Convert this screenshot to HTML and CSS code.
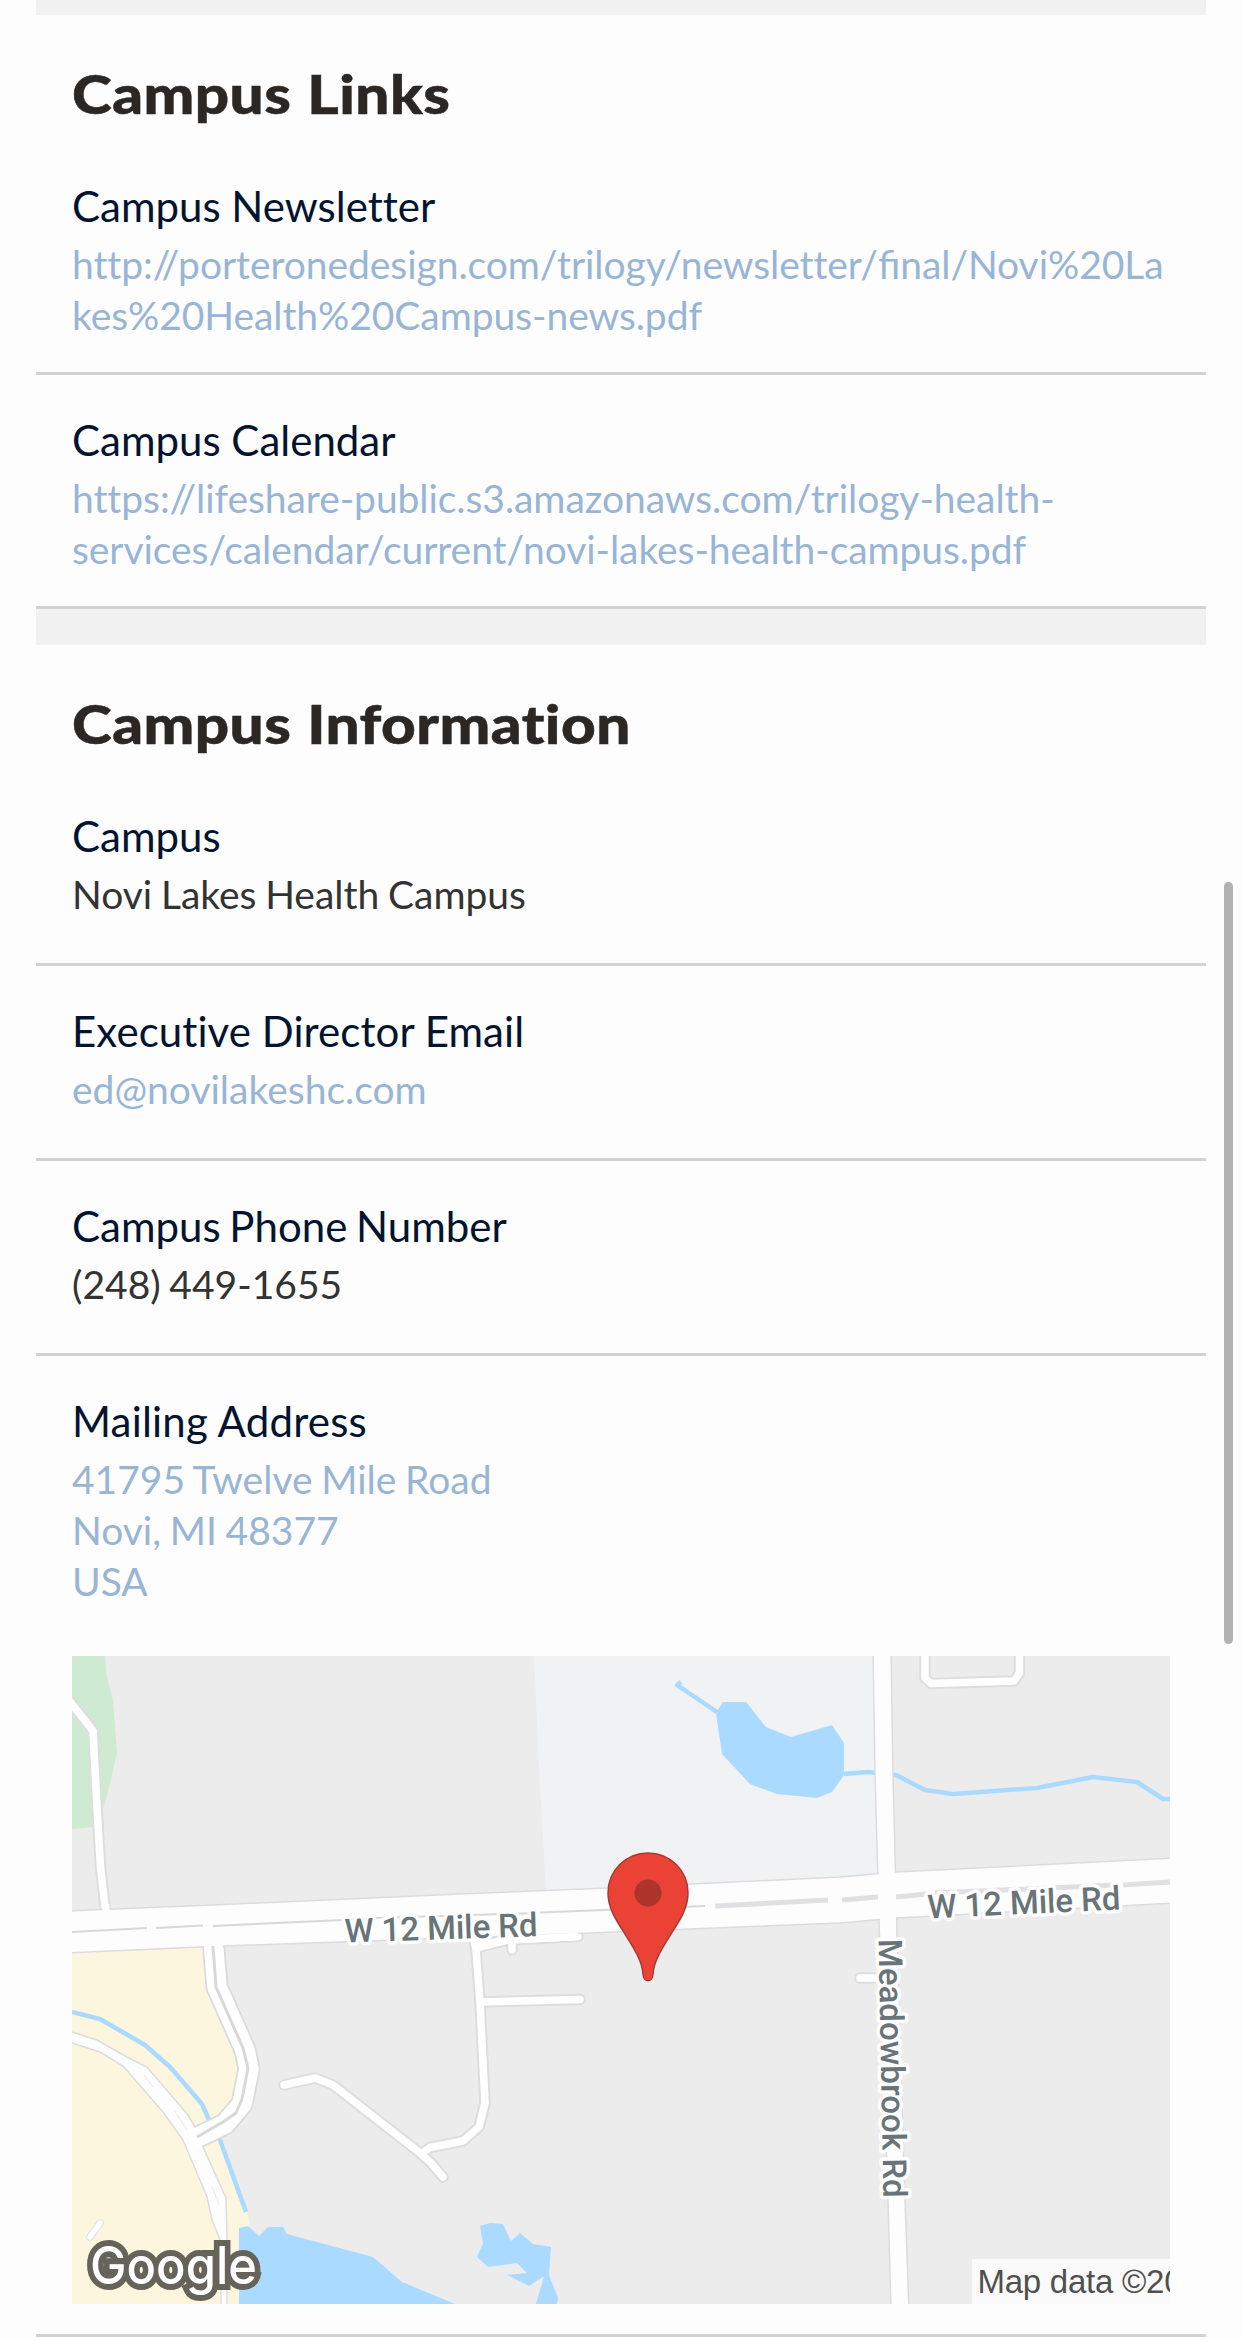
FILE: index.html
```html
<!DOCTYPE html>
<html lang="en">
<head>
<meta charset="utf-8">
<title>Campus</title>
<link rel="stylesheet" href="styles.css">
</head>
<body>
<main class="page">
  <div class="band band-top"></div>
  <section class="links">
    <h2 class="heading">Campus Links</h2>
    <div class="item">
      <h3 class="label">Campus Newsletter</h3>
      <a class="value link">http://porteronedesign.com/trilogy/newsletter/<span class="ligated">fi</span>nal/Novi%20La<br>kes%20Health%20Campus-news.pdf</a>
    </div>
    <div class="item">
      <h3 class="label">Campus Calendar</h3>
      <a class="value link">https://lifeshare-public.s3.amazonaws.com/trilogy-health-<br>services/calendar/current/novi-lakes-health-campus.pdf</a>
    </div>
  </section>
  <div class="band"></div>
  <section class="info">
    <h2 class="heading">Campus Information</h2>
    <div class="item">
      <h3 class="label">Campus</h3>
      <p class="value">Novi Lakes Health Campus</p>
    </div>
    <div class="item">
      <h3 class="label label-email">Executive Director Email</h3>
      <a class="value link">ed@novilakeshc.com</a>
    </div>
    <div class="item">
      <h3 class="label label-phone">Campus Phone Number</h3>
      <p class="value">(248) 449-1655</p>
    </div>
    <div class="item item-map">
      <h3 class="label label-address">Mailing Address</h3>
      <a class="value link">41795 Twelve Mile Road<br>Novi, MI 48377<br>USA</a>
      <svg class="map" viewBox="72 1656 1098 648" role="img" aria-label="Map">
        <rect class="land" x="72" y="1656" width="1098" height="648"/>
        <path class="block" d="M534 1656L540 1787L546 1890H880L873 1656Z"/>
        <path class="park" d="M72 1656H105L106 1673L113 1700L117 1752L111 1780L104 1806L93 1827L72 1829Z"/>
        <path class="sand" d="M72 1950L205 1944L209 1990L236 2050L242 2073L234 2103L218 2135L248 2213L250 2230L239 2228V2304H72Z"/>
        <!-- water -->
        <path class="water" d="M723 1702H746L766 1727L791 1737L832 1725L844 1743V1775L832 1792L817 1798L777 1794L750 1784L722 1754L716 1713Z"/>
        <path class="water" d="M239 2228L248 2226L259 2236L268 2227H283L287 2234L373 2257L402 2282L455 2304H239Z"/>
        <path class="water" d="M480 2226L490 2223L503 2224L511 2241L520 2233L533 2244L551 2247L549 2275L558 2298L557 2304H536L544 2276L529 2286L507 2275L527 2273L517 2263L488 2267L477 2257L483 2243Z"/>
        <path class="stream" d="M681 1682L677 1685L717 1712"/>
        <path class="stream" d="M844 1774L868 1772L896 1775L925 1790L953 1794L1037 1788L1093 1777L1137 1782L1163 1799H1170"/>
        <path class="stream" d="M72 2012L100 2019L145 2045L170 2067L202 2104L209 2120L220 2140L246 2212"/>
        <!-- local streets: casing, then fill -->
        <g class="casing">
          <path d="M68 1699L93 1731L97 1807L100.500 1867L106 1915"/>
          <path d="M925 1650V1678L931 1683.500L1014 1681L1019.500 1673V1650"/>
          <path d="M474 1940L476 1950L480 2002L485 2103L479 2127L463 2141L430 2147.500L421 2154"/>
          <path d="M476 1948L507 1940L578 1936.500M512 1940V1950M481 2002L580 1999.500"/>
          <path d="M284 2085L315 2078L333 2085L420 2153L431 2163L443 2177"/>
          <path d="M860 1978H885"/>
        </g>
        <g class="street">
          <path d="M68 1699L93 1731L97 1807L100.500 1867L106 1915"/>
          <path d="M925 1650V1678L931 1683.500L1014 1681L1019.500 1673V1650"/>
          <path d="M474 1940L476 1950L480 2002L485 2103L479 2127L463 2141L430 2147.500L421 2154"/>
          <path d="M476 1948L507 1940L578 1936.500M512 1940V1950M481 2002L580 1999.500"/>
          <path d="M284 2085L315 2078L333 2085L420 2153L431 2163L443 2177"/>
          <path d="M860 1978H885"/>
        </g>
        <path class="stub-casing" d="M100 2223L90 2237"/>
        <path class="stub" d="M100 2223L90 2237"/>
        <!-- curved road and divided lane -->
        <path class="wide-casing" d="M213 1940L217 1987L245 2050L249 2069L242 2104L225 2124L192 2140"/>
        <path class="road" d="M66 2030L97 2040L127 2057L147 2067L188 2115L195 2127L203 2147L226 2198L227 2240V2310H221V2242L212 2220L207 2197L183 2140L163 2112L123 2066L100 2052L66 2041Z"/>
        <path class="wide" d="M213 1940L217 1987L245 2050L249 2069L242 2104L225 2124L192 2140"/>
        <path class="divider" d="M213 1946L216 1987L243 2048L248 2068L242 2099L236 2113L223 2122L197 2137"/>
        <path class="faint" d="M144 2075L153 2087M174 2110L187 2130M212 2186L219 2205"/>
        <!-- main roads -->
        <path class="road" d="M873 1650L875 1773L879 1920L888 2200L891 2310H909L905 2200L897 1937L893 1773L891 1650Z"/>
        <path class="road" d="M66 1911L213 1905L460 1894L608 1888L840 1877L896 1872L1176 1858V1903L897 1918L840 1923L540 1935L223 1946L200 1947L66 1953Z"/>
        <path class="cover" d="M102.500 1904H109.500V1914H102.500ZM204 1942H223V1951H204ZM879 1868H894.500V1880H879ZM880 1914H896V1926H880Z"/>
        <path class="street" d="M476 1946L507 1940L576 1936.500"/>
        <path class="divider" d="M213 1946V1951"/>
        <path class="thin" d="M72 1932L147 1928M156 1928L203 1925.500M213 1926L343 1920M345 1919L536 1913M540 1912.500L705 1906"/>
        <path class="thick" d="M715 1906L828 1900M842 1900L878 1897M896 1897L927 1894M935 1893L1115 1885M1123 1885L1170 1882"/>
        <!-- marker -->
        <path class="pin" d="M648 1853C626 1853 608 1870.500 608 1893C608 1908 616 1920 625 1934C635 1950 642 1961 643 1974C643.200 1983 652.800 1983 653 1974C654 1961 661 1950 671 1934C680 1920 688 1908 688 1893C688 1870.500 670 1853 648 1853Z"/>
        <circle class="pin-dot" cx="648" cy="1893" r="13.500"/>
        <text class="road-name" transform="translate(345 1942.500) rotate(-1.900)" textLength="193">W 12 Mile Rd</text>
        <text class="road-name" transform="translate(928 1918.500) rotate(-2.700)" textLength="193">W 12 Mile Rd</text>
        <text class="road-name" transform="translate(878.500 1939) rotate(88.900)" textLength="259" lengthAdjust="spacingAndGlyphs">Meadowbrook Rd</text>
        <text class="brand" x="90" y="2284" textLength="167" lengthAdjust="spacingAndGlyphs">Google</text>
        <rect class="credit-box" x="972" y="2259" width="198" height="45"/>
        <text class="credit" x="977.500" y="2293">Map data ©20</text>
      </svg>
    </div>
  </section>
  <div class="scrollbar"></div>
</main>
</body>
</html>
```
FILE: styles.css
```css
* { box-sizing: border-box; }
html { background: #fdfdfd; }
body {
  margin: 0;
  height: 2340px;
  overflow: hidden;
  font-family: Lato, "Open Sans", sans-serif;
}
h2, h3, p { margin: 0; }
.page {
  position: relative;
  height: 2340px;
  padding: 0 36px;
}
.band { height: 36px; background: #f1f1f1; }
.band-top { height: 15px; }
.heading {
  width: fit-content;
  height: 126px;
  margin-left: 36px;
  padding-top: 49px;
  font-size: 53px;
  line-height: 60px;
  font-weight: 900;
  letter-spacing: 0.4px;
  word-spacing: 1px;
  color: #2b2725;
  -webkit-text-stroke: 0.5px #2b2725;
  /* widened letterforms for section titles */
  transform: scaleX(1.137);
  transform-origin: left;
}
.item {
  padding: 38px 36px 43px;
  border-bottom: 3px solid #d2d2d2;
}
.links .item { padding-bottom: 31px; }
.links .value { letter-spacing: -0.06px; }
.info .item-map { padding-bottom: 30px; }
.label {
  margin-bottom: 6px;
  font-size: 42px;
  line-height: 54px;
  font-weight: 400;
  font-variant-ligatures: none;
  color: #02142f;
}
.label-email { letter-spacing: 0.08px; }
.label-phone { word-spacing: -2px; }
.label-address { letter-spacing: 0.2px; }
.value {
  display: block;
  font-size: 39px;
  line-height: 51px;
  color: #333;
  white-space: nowrap;
  word-spacing: -1.3px;
  font-variant-ligatures: none;
}
.ligated { font-variant-ligatures: common-ligatures; letter-spacing: 0; }
.link { color: #98b5d6; }
.map {
  display: block;
  width: 1098px;
  height: 648px;
  margin-top: 49px;
  overflow: hidden;
}
.land { fill: #ececec; }
.block { fill: #f0f2f4; }
.park { fill: #ceead0; }
.sand { fill: #fdf6df; }
.water { fill: #aadaff; }
.stream { fill: none; stroke: #aadaff; stroke-width: 4.5; stroke-linejoin: round; }
.casing, .street, .wide, .wide-casing, .divider, .faint, .thin, .thick, .stub, .stub-casing {
  fill: none;
  stroke-linejoin: round;
}
.casing { stroke: #dddde0; stroke-width: 11.5; stroke-linecap: round; }
.street { stroke: #fff; stroke-width: 7.5; stroke-linecap: round; }
.stub-casing { stroke: #e6e3dc; stroke-width: 8; stroke-linecap: round; }
.stub { stroke: #fff; stroke-width: 5.5; stroke-linecap: round; }
.wide-casing { stroke: #dadadd; stroke-width: 23; }
.wide { stroke: #fff; stroke-width: 19.5; }
.divider { stroke: #d8d8db; stroke-width: 3; }
.faint { stroke: #e9e9ec; stroke-width: 1; }
.road { fill: #fdfdfe; stroke: #dcdcdf; stroke-width: 1.5; }
.cover { fill: #fdfdfe; }
.thin { stroke: #d8d8da; stroke-width: 2; }
.thick { stroke: #e0e0e3; stroke-width: 5; }
.pin { fill: #ea4335; stroke: #a83a36; stroke-width: 1.5; }
.pin-dot { fill: #ad342b; }
.road-name {
  font: 500 33px Roboto, sans-serif;
  fill: #687477;
  stroke: #fdfdfe;
  stroke-width: 7;
  stroke-linejoin: round;
  paint-order: stroke;
}
.brand {
  font: 500 52px Inter, sans-serif;
  fill: #fff;
  stroke: #66645a;
  stroke-width: 12;
  stroke-linejoin: miter;
  paint-order: stroke;
}
.credit-box { fill: #fafafa; }
.credit {
  font: 33px "Liberation Sans", Arial, sans-serif;
  fill: #505050;
  letter-spacing: -0.25px;
}
/* scroll thumb lies over the page edge */
.scrollbar {
  position: absolute;
  top: 882px;
  right: 9px;
  width: 9px;
  height: 762px;
  border-radius: 5px;
  background: #b1b1b1;
}
```
